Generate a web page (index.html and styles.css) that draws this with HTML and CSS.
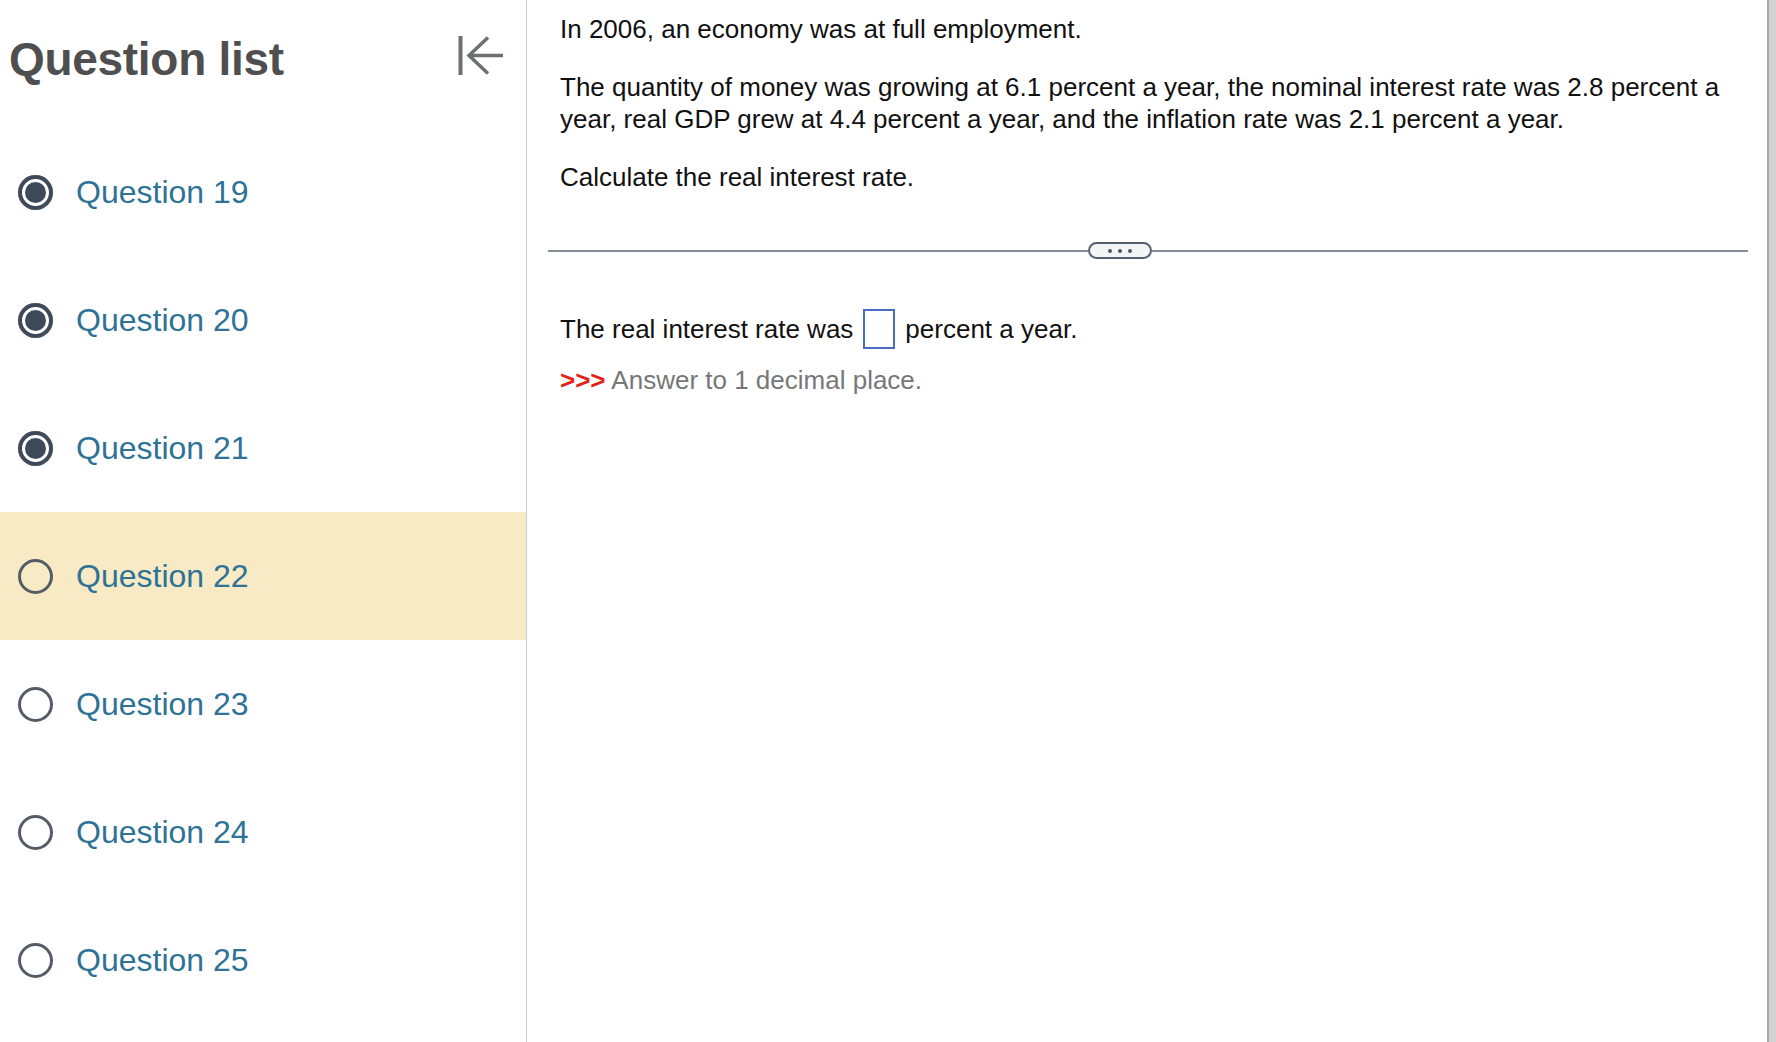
FILE: index.html
```html
<!DOCTYPE html>
<html lang="en">
<head>
<meta charset="utf-8">
<title>Question list</title>
<link rel="stylesheet" href="styles.css">
</head>
<body>
<div class="page">
  <aside class="sidebar">
    <div class="sidebar-header">
      <h1 class="title">Question list</h1>
      <svg class="collapse-icon" width="46" height="40" viewBox="0 0 46 40" aria-hidden="true">
        <line x1="2.5" y1="0" x2="2.5" y2="39" stroke="#6b7070" stroke-width="4"/>
        <line x1="10" y1="19.5" x2="45" y2="19.5" stroke="#6b7070" stroke-width="3.5"/>
        <polyline points="30,1.5 11,19.5 30,37.5" fill="none" stroke="#6b7070" stroke-width="3.5"/>
      </svg>
    </div>
    <ul class="qlist">
      <li class="qrow"><span class="radio filled"></span><span class="qlabel">Question 19</span></li>
      <li class="qrow"><span class="radio filled"></span><span class="qlabel">Question 20</span></li>
      <li class="qrow"><span class="radio filled"></span><span class="qlabel">Question 21</span></li>
      <li class="qrow current"><span class="radio"></span><span class="qlabel">Question 22</span></li>
      <li class="qrow"><span class="radio"></span><span class="qlabel">Question 23</span></li>
      <li class="qrow"><span class="radio"></span><span class="qlabel">Question 24</span></li>
      <li class="qrow"><span class="radio"></span><span class="qlabel">Question 25</span></li>
    </ul>
  </aside>
  <main class="main">
    <p class="para">In 2006, an economy was at full employment.</p>
    <p class="para">The quantity of money was growing at 6.1 percent a year, the nominal interest rate was 2.8 percent a year, real GDP grew at 4.4 percent a year, and the inflation rate was 2.1 percent a year.</p>
    <p class="para last">Calculate the real interest rate.</p>
    <div class="divider">
      <span class="rule left"></span>
      <span class="pill"><span class="dot"></span><span class="dot"></span><span class="dot"></span></span>
      <span class="rule right"></span>
    </div>
    <div class="answer-row">
      <span>The real interest rate was</span>
      <span class="answer-box"></span>
      <span>percent a year.</span>
    </div>
    <p class="hint"><span class="arrows">&gt;&gt;&gt;</span> Answer to 1 decimal place.</p>
  </main>
  <div class="scrollbar"></div>
</div>
</body>
</html>
```

FILE: styles.css
```css
html, body {
  margin: 0;
  padding: 0;
  background: #ffffff;
  font-family: "Liberation Sans", Arial, Helvetica, sans-serif;
}

.page {
  display: flex;
  width: 1776px;
  height: 1042px;
  overflow: hidden;
}

.sidebar {
  width: 526px;
  flex: 0 0 526px;
  border-right: 1px solid #c9cedf;
  height: 1042px;
}

.sidebar-header {
  height: 128px;
  display: flex;
  justify-content: space-between;
  align-items: flex-start;
  padding: 0 22px 0 9px;
  box-sizing: border-box;
}

.title {
  margin: 36px 0 0;
  font-size: 46px;
  line-height: 46px;
  font-weight: bold;
  color: #4f4f4f;
  letter-spacing: -0.3px;
}

.collapse-icon {
  margin-top: 36px;
  display: block;
}

.qlist {
  list-style: none;
  margin: 0;
  padding: 0;
}

.qrow {
  height: 128px;
  display: flex;
  align-items: center;
  padding-left: 18px;
  gap: 23px;
}

.qrow.current {
  background: #f7eac5;
}

.radio {
  width: 35px;
  height: 35px;
  border-radius: 50%;
  box-sizing: border-box;
  border: 3.5px solid #545d67;
  flex: 0 0 35px;
}

.radio.filled {
  border: none;
  background: #3d4a59;
  box-shadow: inset 0 0 0 4px #3d4a59, inset 0 0 0 7px #ffffff;
}

.qlabel {
  font-size: 32px;
  color: #2e7395;
  line-height: 40px;
}

.main {
  flex: 1;
  padding: 13px 19px 0 21px;
  color: #111111;
  font-size: 26px;
  line-height: 32px;
}

.para {
  margin: 0 0 26px 12px;
}

.para.last {
  margin-bottom: 0;
}

.divider {
  margin-top: 49px;
  height: 17px;
  display: flex;
  align-items: center;
}

.rule {
  height: 2px;
  background: #838d98;
}

.rule.left {
  width: 540px;
}

.rule.right {
  flex: 1;
}

.pill {
  width: 64px;
  height: 17px;
  box-sizing: border-box;
  border: 2px solid #556170;
  border-radius: 9px;
  background: #f2f4f6;
  display: flex;
  justify-content: center;
  align-items: center;
  gap: 6px;
}

.dot {
  width: 4px;
  height: 4px;
  border-radius: 50%;
  background: #4a5563;
}

.answer-row {
  margin: 50px 0 0 12px;
  display: flex;
  align-items: center;
  height: 40px;
}

.answer-box {
  width: 32px;
  height: 40px;
  box-sizing: border-box;
  border: 2px solid #4a6cc3;
  margin: 0 10px 0 10px;
}

.hint {
  margin: 15px 0 0 12px;
  color: #777777;
}

.arrows {
  color: #e2231a;
  font-weight: bold;
}

.scrollbar {
  flex: 0 0 9px;
  width: 9px;
  height: 1042px;
  box-sizing: border-box;
  border-left: 2px solid #a8a8a8;
  background: #d3d3d3;
}
```
